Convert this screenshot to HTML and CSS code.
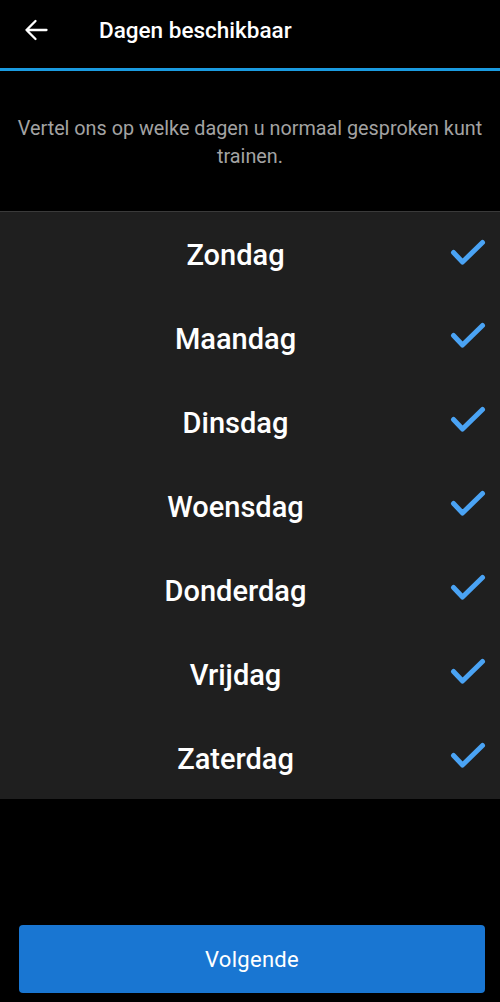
FILE: index.html
```html
<!DOCTYPE html>
<html lang="nl">
<head>
<meta charset="utf-8">
<title>Dagen beschikbaar</title>
<link rel="stylesheet" href="styles.css">
</head>
<body>
<div class="screen">
  <header class="appbar">
    <button class="back" aria-label="Terug">
      <svg width="24" height="22" viewBox="0 0 24 22"><path d="M2.5 11H22.5M11.5 2L2.5 11L11.5 20" fill="none" stroke="#fff" stroke-width="2.3" stroke-linecap="round" stroke-linejoin="round"/></svg>
    </button>
    <h1 class="title">Dagen beschikbaar</h1>
  </header>
  <div class="progress"></div>
  <p class="intro">Vertel ons op welke dagen u normaal gesproken kunt trainen.</p>
  <ul class="days">
    <li class="day"><span class="name">Zondag</span><span class="check"><svg width="36" height="30" viewBox="0 0 36 30"><polyline points="3.5,13.5 12.5,23 32.5,3.5" fill="none" stroke="#4aa3f4" stroke-width="5" stroke-linecap="round" stroke-linejoin="round"/></svg></span></li>
    <li class="day"><span class="name">Maandag</span><span class="check"><svg width="36" height="30" viewBox="0 0 36 30"><polyline points="3.5,13.5 12.5,23 32.5,3.5" fill="none" stroke="#4aa3f4" stroke-width="5" stroke-linecap="round" stroke-linejoin="round"/></svg></span></li>
    <li class="day"><span class="name">Dinsdag</span><span class="check"><svg width="36" height="30" viewBox="0 0 36 30"><polyline points="3.5,13.5 12.5,23 32.5,3.5" fill="none" stroke="#4aa3f4" stroke-width="5" stroke-linecap="round" stroke-linejoin="round"/></svg></span></li>
    <li class="day"><span class="name">Woensdag</span><span class="check"><svg width="36" height="30" viewBox="0 0 36 30"><polyline points="3.5,13.5 12.5,23 32.5,3.5" fill="none" stroke="#4aa3f4" stroke-width="5" stroke-linecap="round" stroke-linejoin="round"/></svg></span></li>
    <li class="day"><span class="name">Donderdag</span><span class="check"><svg width="36" height="30" viewBox="0 0 36 30"><polyline points="3.5,13.5 12.5,23 32.5,3.5" fill="none" stroke="#4aa3f4" stroke-width="5" stroke-linecap="round" stroke-linejoin="round"/></svg></span></li>
    <li class="day"><span class="name">Vrijdag</span><span class="check"><svg width="36" height="30" viewBox="0 0 36 30"><polyline points="3.5,13.5 12.5,23 32.5,3.5" fill="none" stroke="#4aa3f4" stroke-width="5" stroke-linecap="round" stroke-linejoin="round"/></svg></span></li>
    <li class="day"><span class="name">Zaterdag</span><span class="check"><svg width="36" height="30" viewBox="0 0 36 30"><polyline points="3.5,13.5 12.5,23 32.5,3.5" fill="none" stroke="#4aa3f4" stroke-width="5" stroke-linecap="round" stroke-linejoin="round"/></svg></span></li>
  </ul>
  <div class="spacer"></div>
  <div class="footer">
    <button class="next">Volgende</button>
  </div>
</div>
</body>
</html>
```
FILE: styles.css
```css
* { box-sizing: border-box; }
html, body { margin: 0; padding: 0; background: #000; }
body { font-family: Roboto, "Noto Sans", sans-serif; color: #fff; }
.screen { width: 500px; height: 1002px; display: flex; flex-direction: column; background: #000; }
.appbar { height: 68px; display: flex; align-items: center; padding: 0 0 9px 0; }
.back { background: none; border: 0; padding: 0; margin: 0 0 0 24px; width: 24px; height: 22px; display: flex; }
.back svg { display: block; }
.title { margin: 0 0 0 51px; font-size: 22.5px; font-weight: 500; letter-spacing: 0; padding-top: 1px; }
.progress { height: 3px; background: #1a9be0; }
.intro { margin: 0; padding: 44px 10px 0; height: 140px; text-align: center; color: #a3a3a3; font-size: 19.8px; line-height: 28px; }
.days { list-style: none; margin: 0; padding: 0; background: #1f1f1f; border-top: 1px solid #3a3a3a; }
.day { height: 84px; display: flex; align-items: center; padding: 0 4px 0 31px; }
.day:first-child { height: 83px; }
.name { flex: 1; text-align: center; font-size: 29px; font-weight: 500; padding-top: 3px; }
.check { width: 56px; display: flex; justify-content: center; }
.check svg { display: block; }
.spacer { flex: 1; }
.footer { padding: 0 15px 9px 19px; }
.next { width: 466px; height: 68px; border: 0; border-radius: 4px; background: #1976d2; color: #fff; font-family: Roboto, sans-serif; font-size: 22px; font-weight: 400; letter-spacing: 0.3px; padding-top: 2px; }
```
